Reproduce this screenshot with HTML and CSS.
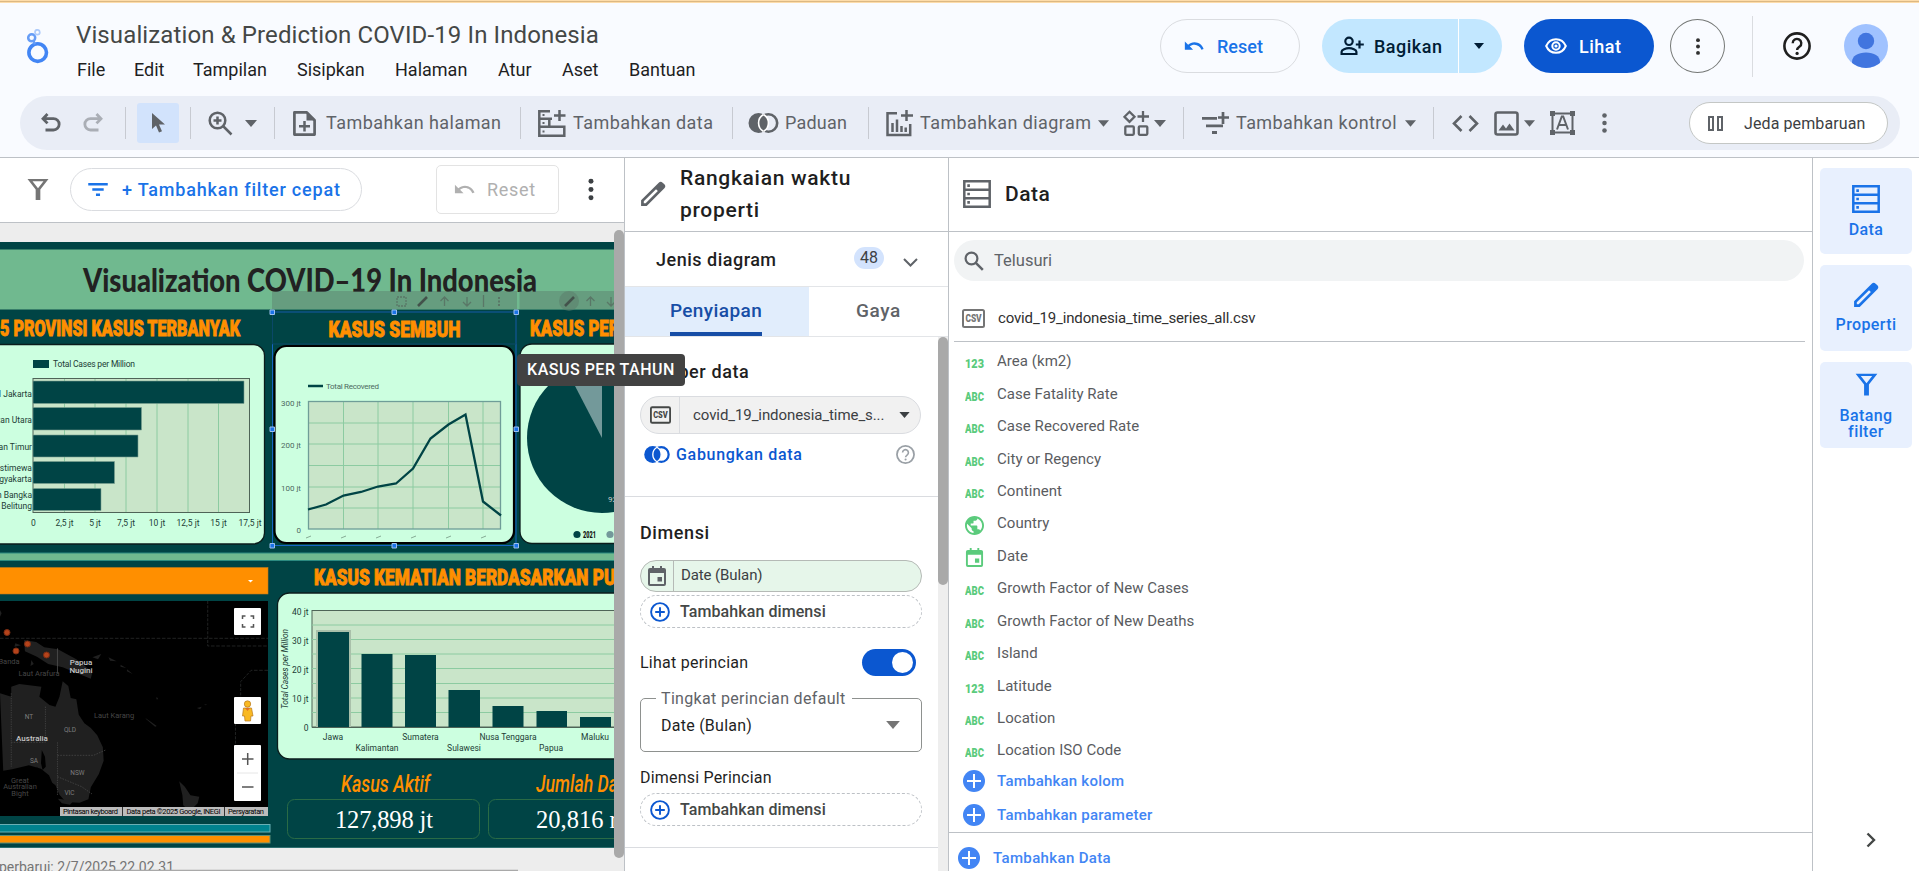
FILE: index.html
```html
<!DOCTYPE html>
<html lang="id">
<head>
<meta charset="utf-8">
<title>Visualization &amp; Prediction COVID-19 In Indonesia</title>
<link rel="stylesheet" href="styles.css">
</head>
<body>
<svg class="defs" aria-hidden="true">
  <symbol id="undo" viewBox="0 0 24 24"><path d="M8.500 3 4 7.700 8.500 12.400M4 7.700h10.500a5.600 5.600 0 0 1 0 11.300H6.500" fill="none" stroke="currentColor" stroke-width="2.800"/></symbol>
  <symbol id="revert" viewBox="0 0 24 24"><path d="M12.500 8c-2.650 0-5.050 1-6.900 2.600L2 7v9h9l-3.620-3.620C8.770 11.220 10.540 10.500 12.500 10.500c3.540 0 6.550 2.310 7.600 5.500l2.370-.780C21.080 11.030 17.150 8 12.500 8z" fill="currentColor"/></symbol>
  <symbol id="caret" viewBox="0 0 12 7"><path d="M0 0h12L6 7z" fill="currentColor"/></symbol>
  <symbol id="dots" viewBox="0 0 8 24"><g fill="currentColor"><circle cx="4" cy="3.500" r="2.600"/><circle cx="4" cy="12" r="2.600"/><circle cx="4" cy="20.500" r="2.600"/></g></symbol>
  <symbol id="funnel" viewBox="0 0 24 24"><path d="M3 3h18l-7 9v9h-4v-9zM7.300 5l4.700 6 4.700-6z" fill="currentColor" fill-rule="evenodd"/></symbol>
  <symbol id="lines" viewBox="0 0 24 16"><path d="M0 0h24v3H0zM5 6.500h14v3H5zM9.500 13h5v3h-5z" fill="currentColor"/></symbol>
  <symbol id="pencil" viewBox="0 0 24 24"><path d="M1 23v-5.200L17.300 1.500a2.600 2.600 0 0 1 3.600 0l1.600 1.600a2.600 2.600 0 0 1 0 3.600L6.200 23zM3.500 20.500h1.700L16.500 9.200l-1.700-1.700L3.500 18.800z" fill="currentColor" fill-rule="evenodd"/></symbol>
  <symbol id="table" viewBox="0 0 28 28"><path d="M1.300 1.300h25.400v25.400H1.300zM1 9.800h26M1 18.200h26" fill="none" stroke="currentColor" stroke-width="2.500"/><path d="M4.300 4.300h2.600v2.600H4.300zM4.300 12.700h2.600v2.600H4.300zM4.300 21.100h2.600v2.600H4.300z" fill="currentColor"/></symbol>
  <symbol id="blend" viewBox="0 0 30 20"><circle cx="10" cy="10" r="10" fill="currentColor"/><circle cx="20" cy="10" r="8.700" fill="none" stroke="currentColor" stroke-width="2.600"/><path d="M15 1.500a9.800 9.800 0 0 0 0 17" fill="none" stroke="#fff" stroke-width="1.600"/><path d="M15 1.500a9.800 9.800 0 0 1 0 17" fill="none" stroke="#fff" stroke-width="1.600"/></symbol>
  <symbol id="plusring" viewBox="0 0 20 20"><circle cx="10" cy="10" r="8.900" fill="none" stroke="currentColor" stroke-width="1.900"/><path d="M10 5.200v9.600M5.200 10h9.600" stroke="currentColor" stroke-width="1.900"/></symbol>
  <symbol id="plusdisc" viewBox="0 0 22 22"><circle cx="11" cy="11" r="11" fill="#4285f4"/><path d="M11 4v14M4 11h14" stroke="#fff" stroke-width="2"/></symbol>
  <symbol id="calendar" viewBox="0 0 18 20"><path d="M4 0h2v2h6V0h2v2h2a2 2 0 0 1 2 2v14a2 2 0 0 1-2 2H2a2 2 0 0 1-2-2V4a2 2 0 0 1 2-2h2zM2 7v11h14V7zM9.500 11h4.500v4.500H9.500z" fill="currentColor" fill-rule="evenodd"/></symbol>
  <symbol id="globe" viewBox="2 2 20 20"><path d="M12 2C6.480 2 2 6.480 2 12s4.480 10 10 10 10-4.480 10-10S17.520 2 12 2zm-1 17.930c-3.950-.490-7-3.850-7-7.930 0-.620.080-1.210.210-1.790L9 15v1c0 1.100.9 2 2 2v1.930zm6.900-2.540c-.260-.810-1-1.390-1.900-1.390h-1v-3c0-.550-.450-1-1-1H8v-2h2c.550 0 1-.450 1-1V7h2c1.100 0 2-.9 2-2v-.410c2.930 1.190 5 4.060 5 7.410 0 2.080-.8 3.970-2.100 5.390z" fill="currentColor"/></symbol>
  <symbol id="helpring" viewBox="0 0 28 28"><circle cx="14" cy="14" r="12.600" fill="none" stroke="currentColor" stroke-width="2.600"/><path d="M9.700 11.200a4.300 4.300 0 1 1 6.900 3.400c-1.500 1.100-2.500 1.700-2.500 3.500" fill="none" stroke="currentColor" stroke-width="2.400"/><circle cx="14.100" cy="21.400" r="1.600" fill="currentColor"/></symbol>
</svg>

<header class="top">
  <svg class="logo" viewBox="0 0 22 35"><circle cx="10.700" cy="23.600" r="8.800" fill="none" stroke="#4285f4" stroke-width="3.600"/><circle cx="4.700" cy="8.800" r="3.500" fill="none" stroke="#669df6" stroke-width="2.500"/><circle cx="10.400" cy="3.200" r="2.400" fill="none" stroke="#aecbfa" stroke-width="1.700"/><path d="m6.500 11.500 1.300 3.800" stroke="#669df6" stroke-width="2.300"/></svg>
  <div class="brand">
    <div class="title">Visualization &amp; Prediction COVID-19 In Indonesia</div>
    <nav class="menu"><span style="width:29px">File</span><span style="width:31px">Edit</span><span style="width:76px">Tampilan</span><span style="width:70px">Sisipkan</span><span style="width:75px">Halaman</span><span style="width:36px">Atur</span><span style="width:39px">Aset</span><span style="width:71px">Bantuan</span></nav>
  </div>
  <div class="actions">
    <div class="btn reset"><svg width="22" height="22"><use href="#revert"/></svg><span>Reset</span></div>
    <div class="share">
      <div class="share-main"><svg width="24" height="20" viewBox="0 0 24 20"><g fill="none" stroke="currentColor" stroke-width="2.200"><circle cx="9" cy="5.300" r="3.700"/><path d="M1.600 18v-2.200c0-2 4.200-3.600 7.400-3.600s7.400 1.600 7.400 3.600V18zM19.500 4.500v8M15.800 8.500h8"/></g></svg><span>Bagikan</span></div>
      <div class="share-more"><svg width="10" height="6"><use href="#caret"/></svg></div>
    </div>
    <div class="btn view"><svg width="22" height="16" viewBox="0 0 22 16"><g fill="none" stroke="currentColor" stroke-width="2"><path d="M1.200 8C3 3.800 6.700 1.200 11 1.200S19 3.800 20.800 8C19 12.200 15.300 14.800 11 14.800S3 12.200 1.200 8z"/><circle cx="11" cy="8" r="3.700"/></g><circle cx="11" cy="8" r="1.600" fill="currentColor"/></svg><span>Lihat</span></div>
    <div class="more"><svg width="6" height="19"><use href="#dots"/></svg></div>
    <i class="vline"></i>
    <svg class="help" width="28" height="28"><use href="#helpring"/></svg>
    <svg class="avatar" viewBox="0 0 44 44"><defs><clipPath id="av"><circle cx="22" cy="22" r="22"/></clipPath></defs><g clip-path="url(#av)"><path d="M0 0h44v44H0z" fill="#a0c2ff"/><g fill="#4175df"><circle cx="22" cy="17" r="8.200"/><path d="M8 38c0-6 6-9.500 14-9.500S36 32 36 38v6H8z"/></g></g></svg>
  </div>
</header>

<div class="toolbar">
  <svg style="margin-left:19px" width="24" height="24"><use href="#undo"/></svg>
  <svg class="faint" style="margin-left:18px" width="24" height="24"><g transform="matrix(-1 0 0 1 24 0)"><use href="#undo" width="24" height="24"/></g></svg>
  <i style="margin-left:20px"></i>
  <div class="pick"><svg width="13" height="20" viewBox="0 0 13 20"><path d="M0 0v16l4-3.500 3 7 3-1.300-3-6.700H13z" fill="currentColor"/></svg></div>
  <i style="margin-left:11px"></i>
  <svg style="margin-left:17px" width="25" height="25" viewBox="0 0 25 25"><g fill="none" stroke="currentColor" stroke-width="2.500"><circle cx="9.500" cy="9.500" r="7.800"/><path d="m15 15 8.500 8.500M9.500 5.500v8M5.500 9.500h8"/></g></svg>
  <svg style="margin-left:12px" width="12" height="7"><use href="#caret"/></svg>
  <i style="margin-left:17px"></i>
  <svg style="margin-left:18px" width="23" height="27" viewBox="0 0 23 27"><path d="M1.400 2.400h12.400l7.800 7.800v14.400H1.400z" fill="none" stroke="currentColor" stroke-width="2.700" stroke-linejoin="round"/><path d="M13.500 1v9.500H22z" fill="currentColor"/><path d="M11.500 11v10.500M6 16.300h11" stroke="currentColor" stroke-width="2.500"/></svg>
  <span style="margin-left:10px;width:177px;letter-spacing:.450px">Tambahkan halaman</span>
  <i style="margin-left:17px"></i>
  <svg style="margin-left:17px" width="28" height="28" viewBox="0 0 28 28"><g fill="none" stroke="currentColor" stroke-width="2.500"><path d="M12 2.300H1.300v7.500H14M21.500 1v11M16 6.500h11.500M1.300 9.800h10v8h15v8.900H1.300zM1.300 17.800h11M1.300 26.700V9"/></g><path d="M4.500 5h2v2h-2zM4.500 13h2v2h-2zM4.500 21.500h2v2h-2z" fill="currentColor"/></svg>
  <span style="margin-left:7px;width:141px;letter-spacing:.450px">Tambahkan data</span>
  <i style="margin-left:18px"></i>
  <svg style="margin-left:15px" width="31" height="20"><use href="#blend"/></svg>
  <span style="margin-left:6px;width:64px;letter-spacing:.200px">Paduan</span>
  <i style="margin-left:19px"></i>
  <svg style="margin-left:17px" width="27" height="27" viewBox="0 0 27 27"><g fill="none" stroke="currentColor" stroke-width="2.500"><path d="M11 3.300H1.500V25h22.700V14M20.500 0v11M15 5.500h12"/><path d="M6.500 13v9M11 9.500V22M15.500 16v6M19.700 17.500V22"/></g></svg>
  <span style="margin-left:7px;width:173px;letter-spacing:.420px">Tambahkan diagram</span>
  <svg style="margin-left:5px" width="11" height="7"><use href="#caret"/></svg>
  <svg style="margin-left:14px" width="27" height="26" viewBox="0 0 27 26"><g fill="none" stroke="currentColor" stroke-width="2.300"><path d="m6.500 1.800 5 5-5 5-5-5zM20 1v11M14.500 6.500h11.500"/><rect x="2.300" y="16.300" width="8.500" height="8.500" rx="1"/><rect x="15.800" y="16.300" width="8.500" height="8.500" rx="1"/></g></svg>
  <svg style="margin-left:4px" width="12" height="7"><use href="#caret"/></svg>
  <i style="margin-left:17px"></i>
  <svg style="margin-left:18px" width="27" height="24" viewBox="0 0 27 24"><path d="M0 6h15v2.700H0zM4 13.500h17v2.700H4zM10 20h5v3h-5z" fill="currentColor"/><path d="M21 1v12M16 6.500h11" stroke="currentColor" stroke-width="2.700"/></svg>
  <span style="margin-left:7px;width:162px;letter-spacing:.400px">Tambahkan kontrol</span>
  <svg style="margin-left:7px" width="11" height="7"><use href="#caret"/></svg>
  <i style="margin-left:17px"></i>
  <svg style="margin-left:18px" width="27" height="17" viewBox="0 0 27 17"><path d="M9.500 1 2 8.500 9.500 16M17.500 1 25 8.500 17.500 16" fill="none" stroke="currentColor" stroke-width="2.600"/></svg>
  <svg style="margin-left:15px" width="25" height="25" viewBox="0 0 25 25"><rect x="1.500" y="1.500" width="22" height="22" rx="2" fill="none" stroke="currentColor" stroke-width="2.600"/><path d="m4.500 19.500 4.500-6 3 4 3.500-5 5 7z" fill="currentColor"/></svg>
  <svg style="margin-left:5px" width="11" height="7"><use href="#caret"/></svg>
  <svg style="margin-left:15px" width="25" height="24" viewBox="0 0 25 24"><rect x="2.500" y="2.500" width="20" height="19" fill="none" stroke="currentColor" stroke-width="2"/><path d="M0 0h5v5H0zM20 0h5v5h-5zM0 19h5v5H0zM20 19h5v5h-5z" fill="currentColor"/><path d="m7 18.500 4.800-13h1.400l4.800 13M8.800 14h7.400" fill="none" stroke="currentColor" stroke-width="2"/></svg>
  <svg style="margin-left:26px" width="7" height="22"><use href="#dots"/></svg>
  <div class="pause"><svg width="15" height="15" viewBox="0 0 15 15"><path d="M1 1h4v13H1zM10 1h4v13h-4z" fill="none" stroke="currentColor" stroke-width="2"/></svg><span>Jeda pembaruan</span></div>
</div>

<main>
  <section class="left">
    <div class="filters">
      <svg class="fn" width="28" height="29"><use href="#funnel"/></svg>
      <div class="chip"><svg width="20" height="13"><use href="#lines"/></svg><span>+ Tambahkan filter cepat</span></div>
      <div class="undo-box"><svg width="23" height="23"><use href="#revert"/></svg><span>Reset</span></div>
      <svg class="fd" width="8" height="23"><use href="#dots"/></svg>
    </div>
    <div class="canvas">
      <svg class="report" width="614" height="648" viewBox="0 223 614 648">
        <rect y="242" width="614" height="606" fill="#004445"/>
        <rect y="249.500" width="614" height="60" fill="#70b98f"/>
        <text class="hand" x="83" y="291.500" textLength="454" lengthAdjust="spacingAndGlyphs">Visualization COVID–19 In Indonesia</text>
        <path d="M272 291h245v18H272zM519.500 291H614v18h-94.500z" fill="#5b7d6c" opacity=".45"/>
        <g fill="none" stroke="#5a7767" stroke-width="1.300"><rect x="397" y="297" width="9" height="9" stroke-dasharray="2 1"/><path d="M444.500 306v-9m-4 4 4-4 4 4M467 297v9m-4-4 4 4 4-4M483.500 295v12M590.500 306v-9m-4 4 4-4 4 4M611 297v9m-4-4 4 4 4-4"/><path d="M499 297v9" stroke-width="2" stroke-dasharray="2 1.500"/></g>
        <circle cx="569" cy="301" r="10" fill="#5b7d6c" opacity=".55"/>
        <path d="m418 306 9-9M565 306l9-9" stroke="#43524b" stroke-width="2.600"/>
        <g class="anton"><text x="0" y="336" textLength="240" lengthAdjust="spacingAndGlyphs">5 PROVINSI KASUS TERBANYAK</text><text x="328.500" y="337" textLength="132" lengthAdjust="spacingAndGlyphs">KASUS SEMBUH</text><text x="530" y="335.500" textLength="149" lengthAdjust="spacingAndGlyphs">KASUS PER TAHUN</text></g>
        <g fill="#ccffe0" stroke="#0b1d1c" stroke-width="1.300"><rect x="-20" y="344.500" width="284.500" height="199.500" rx="11"/><rect x="274.500" y="346" width="239.500" height="197" rx="12" stroke-width="2.200" stroke="#000"/><rect x="520" y="344" width="200" height="199.500" rx="12"/></g>

        <g class="lab">
          <rect x="33" y="360" width="16" height="8" fill="#004445"/><text x="53" y="367" textLength="82">Total Cases per Million</text>
          <rect x="33" y="378.500" width="216.500" height="134" fill="#c9e5c9" stroke="#4e6457"/>
          <path d="M64.500 379v133M95 379v133M126 379v133M157 379v133M188 379v133M218.500 379v133" stroke="#8ccba1"/>
          <g fill="#004445" stroke="#7aa091" stroke-width=".6"><path d="M33 381h211v22.500H33zM33 407.500h108.500V430H33zM33 435h105v22H33zM33 461.500h81.500v22H33zM33 488.500h68v22H33z"/></g>
          <g text-anchor="end"><text x="32" y="396.500">DKI Jakarta</text><text x="32" y="422.500">Kalimantan Utara</text><text x="32" y="449.500">Kalimantan Timur</text><text x="32" y="470.500">Daerah Istimewa</text><text x="32" y="481.500">Yogyakarta</text><text x="32" y="497.500">Kepulauan Bangka</text><text x="32" y="508.500">Belitung</text></g>
          <g text-anchor="middle"><text x="33.500" y="525.500">0</text><text x="64.500" y="525.500">2,5 jt</text><text x="95" y="525.500">5 jt</text><text x="126" y="525.500">7,5 jt</text><text x="157" y="525.500">10 jt</text><text x="188" y="525.500">12,5 jt</text><text x="218.500" y="525.500">15 jt</text><text x="250" y="525.500">17,5 jt</text></g>
        </g>

        <g class="lab dim">
          <path d="M308 386h15" stroke="#004445" stroke-width="2.500"/><text x="326" y="389" textLength="53">Total Recovered</text>
          <rect x="308.500" y="401.500" width="192" height="127.500" fill="#c9e5c9"/>
          <path d="M343.500 402v127M378 402v127M413 402v127M448.500 402v127M483 402v127M309 423h192M309 444h192M309 465.500h192M309 487h192M309 508h192" stroke="#8ccba1"/>
          <rect x="308.500" y="401.500" width="192" height="127.500" fill="none" stroke="#6f9d98" stroke-width="1.300"/>
          <path d="m308 509.500 18-5 17.500-9 17.500-3.500 17-5.500 18-3 17-15 17.500-30 18-14 17-10 17.500 87 18 14" fill="none" stroke="#004445" stroke-width="2.300"/>
          <path d="m306 538 5-2m30 2 5-2m30 2 5-2m30 2 5-2m30 2 5-2m30 2 5-2" stroke="#86ab95"/>
          <g text-anchor="end"><text x="301" y="405.500">300 jt</text><text x="301" y="447.500">200 jt</text><text x="301" y="490.500">100 jt</text><text x="301" y="532.500">0</text></g>
        </g>

        <circle cx="602" cy="438" r="75" fill="#004445"/>
        <path d="M602 438V363a75 75 0 0 0-34.500 8.400z" fill="#73999a"/>
        <text x="608" y="502" font-family="Roboto" font-size="8" fill="#ccc">92</text>
        <circle cx="577" cy="534.500" r="3.600" fill="#004445"/><circle cx="610" cy="534.500" r="3.600" fill="#73999a"/>
        <text x="583" y="537.500" textLength="13" lengthAdjust="spacingAndGlyphs" font-family="Roboto" font-weight="900" font-size="8.500" fill="#111">2021</text>

        <path d="M272.500 312H516v233.500H272.500z" fill="none" stroke="#1665c4"/>
        <path d="M272.500 312H516v32H272.500z" fill="none" stroke="#0a4868"/>
        <g fill="#1a73e8" stroke="#9cc0ee"><path d="M270 310h4.500v4.500H270zM392 310h4.500v4.500H392zM514 310h4.500v4.500H514zM270 427h4.500v4.500H270zM514 427h4.500v4.500H514zM270 543.500h4.500v4.500H270zM392 543.500h4.500v4.500H392zM514 543.500h4.500v4.500H514z"/></g>

        <rect x="-3" y="553" width="620" height="7.500" fill="#70b98f" stroke="#2b8a80"/>
        <rect x="-3" y="567.500" width="271" height="26.500" fill="#ff8f00" stroke="#c2791a" stroke-width=".6"/><path d="M248 580h5l-2.500 2.500z" fill="#fff"/>

        <rect y="601" width="268" height="215" fill="#000"/>
        <g transform="translate(0 560) scale(.4018 .3333)">
          <path d="M0 400l28 10v-30l20-8 55 8-5 30 25 25 15 5 10-30 8-46 14 14 6 36 14 4 6 46 14 26 16 14 16 22 14 36 2 40-12 40-20 40-6 36-22 10-34-2-16-22-10-28-8-8-8-22-20-20-30-10-42 12-22 4z" fill="#202020"/>
          <path d="M144 716l24 4 22-6-16 20-20-4zM446 664l14 16 14 26 22 4-4 20-20 24-16-18-2-30zM60 240l30 6 20 16 34 6 46 30 40 38-4 20-34-16-36-18-36-10-28-22-30-16zM362 474l28 24-4 2-22-22zM230 292l22-10-8 16zM490 444l12-4-4 8zM508 434l8-2-5 4zM390 410l4 8h-5zM270 292l20 12-16-2zM300 314l14 10-14-4zM316 328l14 14-14-8zM0 150l4 10-4 10zM38 250l14 6-16 4zM78 300l6 12-8 6z" fill="#202020"/>
          <path d="M104 570l8 20 2 30-8 10-4-20zM92 620l4 12-6-4z" fill="#000"/>
          <g fill="none" stroke="#4a4a4a" stroke-width="2" stroke-dasharray="4 3"><path d="M28 400v220M113 440v107H28M143 547v160M143 586h90l30-16M143 650l40 20 20 10 26 22"/></g>
          <path d="M0 235h667M517 123v135h150M667 331h-42l-26 34v46M586 490v64" fill="none" stroke="#2c2f2f" stroke-width="2" stroke-dasharray="9 4"/><path d="M143 265v75" stroke="#555" stroke-width="2"/>
        </g>
        <g fill="#b5431b" stroke="#7b2c12"><circle cx="7" cy="632.500" r="3"/><circle cx="27.500" cy="644" r="3"/><circle cx="16" cy="651" r="3"/><circle cx="46.500" cy="655" r="3"/></g>
        <g class="sea" text-anchor="middle"><text x="9" y="663.500">Banda</text><text x="39" y="675.500">Laut Arafura</text><text x="114" y="718">Laut Karang</text><text x="20" y="782.500">Great</text><text x="20" y="789">Australian</text><text x="20" y="795.500">Bight</text></g>
        <g class="state" text-anchor="middle"><text x="29" y="718.500">NT</text><text x="70" y="732">QLD</text><text x="34" y="762.500">SA</text><text x="77.500" y="774.500">NSW</text><text x="69.500" y="795">VIC</text></g>
        <g class="nation" text-anchor="middle"><text x="81" y="665">Papua</text><text x="81" y="673">Nugini</text><text x="32" y="741">Australia</text></g>
        <g fill="#fff"><rect x="234" y="608" width="27" height="27" rx="1"/><rect x="234" y="697" width="27" height="27" rx="1"/><rect x="234" y="745" width="27" height="56" rx="1"/></g>
        <path d="M242.500 619v-3h3M250.500 616h3v3M253.500 624v3h-3M245.500 627h-3v-3M242 759h11.500M247.700 753v12M242 787h11.500" fill="none" stroke="#555" stroke-width="1.500"/><path d="M237 773h21" stroke="#e6e6e6"/>
        <g fill="#f9b923" stroke="#b8791f" stroke-width=".7"><circle cx="247.500" cy="704" r="3.200"/><path d="M243.500 708h8l1.500 8h-2l-.5 5h-5.500l-.5-5h-2z"/></g><path d="m245 708 2.500 3 2.500-3z" fill="#e0702a"/>
        <path d="M60 807h208v9H60z" fill="#bcbcbc"/><path d="M122.500 807v9M224.500 807v9" stroke="#333"/>
        <g font-family="Roboto" font-size="7.500" fill="#000"><text x="63" y="814" textLength="55">Pintasan keyboard</text><text x="126.500" y="814" textLength="94">Data peta ©2025 Google, INEGI</text><text x="228" y="814" textLength="36">Persyaratan</text></g>
        <rect x="-3" y="824.500" width="273" height="7.500" fill="#00838f" stroke="#69b0b5"/><rect x="-3" y="835.500" width="273" height="7.500" fill="#ff8f00" stroke="#5e8f78"/>

        <g class="anton"><text x="314" y="585" textLength="334" lengthAdjust="spacingAndGlyphs">KASUS KEMATIAN BERDASARKAN PULAU</text></g>
        <rect x="277.500" y="593" width="400" height="166" rx="12" fill="#ccffe0" stroke="#0b1d1c" stroke-width="1.300"/>
        <g class="lab">
          <rect x="312" y="610.500" width="330" height="116.500" fill="#c9e5c9" stroke="#4e6457"/>
          <path d="M312 625h302M312 639.500h302M312 654h302M312 668.500h302M312 683.500h302M312 698h302M312 712.500h302" stroke="#8ccba1"/>
          <path d="M316 630h35v97h-35z" fill="#a9c0aa"/>
          <path d="M318 632h31v95h-31zM361.500 654h31v73h-31zM405 655h31v72h-31zM448.500 690H480v37h-31.500zM492.500 706h31v21h-31zM536.500 711H567v16h-30.500zM580 717h31v10h-31z" fill="#004445"/>
          <path d="M312 727.500h302" stroke="#4e6457"/>
          <g text-anchor="end"><text x="308.500" y="614.500">40 jt</text><text x="308.500" y="643.500">30 jt</text><text x="308.500" y="672.500">20 jt</text><text x="308.500" y="701.500">10 jt</text><text x="308.500" y="730.500">0</text></g>
          <g text-anchor="middle"><text x="333" y="740">Jawa</text><text x="377" y="751">Kalimantan</text><text x="420.500" y="740">Sumatera</text><text x="464" y="751">Sulawesi</text><text x="508" y="740">Nusa Tenggara</text><text x="551" y="751">Papua</text><text x="595" y="740">Maluku</text></g>
          <text transform="translate(288 709) rotate(-90)" textLength="80" font-style="italic">Total Cases per Million</text>
        </g>
        <g class="osw"><text x="341" y="792" textLength="89" lengthAdjust="spacingAndGlyphs">Kasus Aktif</text><text x="536" y="792" textLength="97" lengthAdjust="spacingAndGlyphs">Jumlah Data</text></g>
        <g fill="none" stroke="#2a6b45"><rect x="287.500" y="799.500" width="192" height="39" rx="7"/><rect x="488.500" y="799.500" width="192" height="39" rx="7"/></g>
        <g font-family="Liberation Serif, serif" font-size="24.500" fill="#fff"><text x="335" y="828" textLength="98">127,898 jt</text><text x="536" y="828">20,816 rb</text></g>
        <path d="M0 847.500h614" stroke="#2d6f70"/>
        <text x="174" y="872" text-anchor="end" font-family="Roboto" font-size="14" fill="#757575">Data Terakhir Diperbarui: 2/7/2025 22.02.31</text>
        <path d="M88 870.500h430" stroke="#a9a9a9" stroke-width="1.500"/>
      </svg>
      <div class="track"><div class="thumb"></div></div>
    </div>
  </section>

  <section class="props">
    <div class="ptitle"><svg width="26" height="26"><use href="#pencil"/></svg><span>Rangkaian waktu<br>properti</span></div>
    <div class="kind"><span class="k1">Jenis diagram</span><span class="badge">48</span><svg width="15" height="9" viewBox="0 0 15 9"><path d="m1 1 6.500 6.500L14 1" fill="none" stroke="#5f6368" stroke-width="2"/></svg></div>
    <div class="tabs"><div class="tab on"><span>Penyiapan</span></div><div class="tab">Gaya</div></div>
    <div class="pscroll">
      <div class="pbody">
        <div class="group first">
          <h3>Sumber data</h3>
          <div class="src"><div class="ic"><svg class="csv" width="21" height="18" viewBox="0 0 23 19"><rect x="1" y="1" width="21" height="17" rx="1.500"/><text x="3.500" y="13.200" textLength="16" lengthAdjust="spacingAndGlyphs">CSV</text></svg></div><span>covid_19_indonesia_time_s...</span><svg width="11" height="6"><use href="#caret"/></svg></div>
          <div class="mix"><svg width="26" height="17"><use href="#blend"/></svg><span>Gabungkan data</span><svg class="q" width="19" height="19" viewBox="0 0 28 28"><use href="#helpring"/></svg></div>
        </div>
        <div class="group second">
          <h3>Dimensi</h3>
          <div class="dim-pill"><div class="ic"><svg width="18" height="20"><use href="#calendar"/></svg></div><span>Date (Bulan)</span></div>
          <div class="add"><svg width="20" height="20"><use href="#plusring"/></svg><span>Tambahkan dimensi</span></div>
          <div class="switch-row"><span>Lihat perincian</span><div class="switch"></div></div>
          <div class="select"><label>Tingkat perincian default</label><span>Date (Bulan)</span><svg width="14" height="8"><use href="#caret"/></svg></div>
          <div class="sub">Dimensi Perincian</div>
          <div class="add low"><svg width="20" height="20"><use href="#plusring"/></svg><span>Tambahkan dimensi</span></div>
        </div>
      </div>
      <div class="ptrack"><div class="pthumb"></div></div>
    </div>
  </section>

  <section class="data">
    <div class="dtitle"><svg width="28" height="28"><use href="#table"/></svg><span>Data</span></div>
    <div class="search"><svg width="20" height="20" viewBox="0 0 20 20"><circle cx="7.500" cy="7.500" r="5.900" fill="none" stroke="#5f6368" stroke-width="2.200"/><path d="m11.800 11.800 7 7" stroke="#5f6368" stroke-width="2.500"/></svg><span>Telusuri</span></div>
    <div class="file"><svg class="csv" width="23" height="19" viewBox="0 0 23 19"><rect x="1" y="1" width="21" height="17" rx="1.500"/><text x="3.500" y="13.200" textLength="16" lengthAdjust="spacingAndGlyphs">CSV</text></svg><span>covid_19_indonesia_time_series_all.csv</span></div>
    <ul class="fields">
      <li><svg class="ty" width="20" height="12"><text y="11" textLength="19" lengthAdjust="spacingAndGlyphs">123</text></svg>Area (km2)</li>
      <li><svg class="ty" width="20" height="12"><text y="11" textLength="19" lengthAdjust="spacingAndGlyphs">ABC</text></svg>Case Fatality Rate</li>
      <li><svg class="ty" width="20" height="12"><text y="11" textLength="19" lengthAdjust="spacingAndGlyphs">ABC</text></svg>Case Recovered Rate</li>
      <li><svg class="ty" width="20" height="12"><text y="11" textLength="19" lengthAdjust="spacingAndGlyphs">ABC</text></svg>City or Regency</li>
      <li><svg class="ty" width="20" height="12"><text y="11" textLength="19" lengthAdjust="spacingAndGlyphs">ABC</text></svg>Continent</li>
      <li><svg class="pic" width="19" height="19"><use href="#globe"/></svg>Country</li>
      <li><svg class="pic" width="19" height="19"><use href="#calendar"/></svg>Date</li>
      <li><svg class="ty" width="20" height="12"><text y="11" textLength="19" lengthAdjust="spacingAndGlyphs">ABC</text></svg>Growth Factor of New Cases</li>
      <li><svg class="ty" width="20" height="12"><text y="11" textLength="19" lengthAdjust="spacingAndGlyphs">ABC</text></svg>Growth Factor of New Deaths</li>
      <li><svg class="ty" width="20" height="12"><text y="11" textLength="19" lengthAdjust="spacingAndGlyphs">ABC</text></svg>Island</li>
      <li><svg class="ty" width="20" height="12"><text y="11" textLength="19" lengthAdjust="spacingAndGlyphs">123</text></svg>Latitude</li>
      <li><svg class="ty" width="20" height="12"><text y="11" textLength="19" lengthAdjust="spacingAndGlyphs">ABC</text></svg>Location</li>
      <li><svg class="ty" width="20" height="12"><text y="11" textLength="19" lengthAdjust="spacingAndGlyphs">ABC</text></svg>Location ISO Code</li>
    </ul>
    <div class="adds"><div><svg width="22" height="22"><use href="#plusdisc"/></svg>Tambahkan kolom</div><div><svg width="22" height="22"><use href="#plusdisc"/></svg>Tambahkan parameter</div></div>
    <div class="foot"><svg width="22" height="22"><use href="#plusdisc"/></svg>Tambahkan Data</div>
  </section>

  <aside class="rail">
    <div class="rcard"><svg width="28" height="28"><use href="#table"/></svg><span>Data</span></div>
    <div class="rcard"><svg width="26" height="26"><use href="#pencil"/></svg><span>Properti</span></div>
    <div class="rcard two"><svg width="29" height="29"><use href="#funnel"/></svg><span>Batang<br>filter</span></div>
    <svg class="go" width="10" height="16" viewBox="0 0 10 16"><path d="m1.500 1.500 6.500 6.500-6.500 6.500" fill="none" stroke="#444746" stroke-width="2.400"/></svg>
  </aside>
  <div class="tip">KASUS PER TAHUN</div>
</main>
</body>
</html>
```
FILE: styles.css
```css
* { box-sizing: border-box; }
body { margin: 0; width: 1919px; height: 871px; overflow: hidden; background: #f9fbff; font-family: Roboto, "Open Sans", sans-serif; color: #1f1f1f; display: flex; flex-direction: column; }
.defs { position: absolute; width: 0; height: 0; }
svg { display: block; flex: none; }
span { white-space: nowrap; }

.top { height: 96px; flex: none; border-top: 3px solid #fddcaa; display: flex; background: #f9fbff; position: relative; }
.top::before { content: ""; position: absolute; top: -2px; left: 0; right: 0; height: 1px; background: #dcb883; }
.logo { width: 22px; height: 35px; margin: 26px 0 0 27px; }
.brand { margin-left: 27px; width: 640px; padding-top: 16px; }
.title { font-size: 24px; line-height: 32px; letter-spacing: .120px; color: #444746; white-space: nowrap; }
.menu { display: flex; gap: 28px; margin: 7px 0 0 1px; font-size: 18px; line-height: 24px; }
.actions { margin-left: auto; width: 759px; display: flex; padding-top: 16px; font-size: 18px; font-weight: 500; }
.btn, .share { height: 54px; border-radius: 27px; display: flex; align-items: center; }
.reset { width: 140px; border: 1px solid #dadce0; color: #1a73e8; padding-left: 22px; gap: 12px; }
.share { margin-left: 22px; width: 180px; background: #c2e7ff; color: #001d35; }
.share-main { width: 137px; height: 54px; border-right: 1px solid #fff; display: flex; align-items: center; padding-left: 18px; gap: 10px; letter-spacing: .5px; }
.share-more { flex: 1; display: flex; justify-content: center; padding-right: 3px; }
.view { margin-left: 22px; width: 130px; background: #0b57d0; color: #fff; padding-left: 21px; gap: 12px; letter-spacing: .5px; }
.more { margin-left: 16px; width: 55px; height: 54px; border: 1px solid #747775; border-radius: 50%; display: flex; align-items: center; justify-content: center; color: #303030; }
.vline { margin: -3px 0 0 27px; width: 1px; height: 61px; background: #dadce0; }
.help { margin: 13px 0 0 30px; }
.avatar { width: 44px; height: 44px; margin: 5px 0 0 33px; }

.toolbar { height: 54px; flex: none; margin: 0 19px 7px 20px; background: #e9edf6; border-radius: 27px; display: flex; align-items: center; color: #5f6368; font-size: 18px; }
.toolbar > i { width: 1px; height: 32px; background: #c7cad1; flex: none; }
.toolbar > span { line-height: 24px; flex: none; }
.toolbar .faint { opacity: .45; }
.pick { margin-left: 11px; width: 42px; height: 40px; border-radius: 3px; background: #d2e3fc; display: flex; align-items: center; justify-content: center; }
.pause { margin-left: auto; margin-right: 12px; width: 199px; height: 42px; border: 1px solid #c4c7c5; border-radius: 21px; background: #fff; display: flex; align-items: center; padding-left: 18px; gap: 21px; font-size: 16px; letter-spacing: .1px; color: #3c4043; }
.pause svg { color: #5f6368; }

main { flex: 1; min-height: 0; border-top: 1px solid #bdc1c6; background: #fff; display: flex; position: relative; }
.left { width: 624px; flex: none; display: flex; flex-direction: column; }
.filters { height: 65px; flex: none; border-bottom: 1px solid #bdc1c6; display: flex; padding-top: 7px; font-size: 18px; }
.fn { margin: 10px 0 0 24px; color: #757575; }
.chip { margin: 3px 0 0 18px; width: 292px; height: 43px; border: 1px solid #dadce0; border-radius: 22px; display: flex; align-items: center; padding-left: 17px; gap: 14px; color: #1a73e8; font-weight: 500; letter-spacing: .8px; }
.undo-box { margin-left: 74px; width: 123px; height: 49px; border: 1px solid #e3e3e3; border-radius: 5px; display: flex; align-items: center; padding-left: 16px; gap: 11px; color: #b0b0b0; letter-spacing: .7px; }
.fd { margin: 13px 0 0 28px; color: #3c4043; }
.canvas { flex: 1; min-height: 0; background: #ededed; display: flex; }
.track { width: 10px; padding-top: 7px; }
.thumb { height: 628px; border-radius: 5px; background: #a9a9a9; }
.hand { font-family: "Lato", sans-serif; font-weight: 900; font-size: 32px; fill: #222; }
.anton { font-family: Roboto, sans-serif; font-weight: 900; font-size: 22.500px; fill: #ff8f00; stroke: #ff8f00; stroke-width: .9px; }
.osw { font-family: Roboto, sans-serif; font-style: italic; font-weight: 500; font-size: 23px; fill: #ff8f00; }
.lab text { font-family: Roboto, sans-serif; font-size: 8.500px; fill: #223d36; }
.lab.dim text { fill: #4d6a60; font-size: 8px; }
.sea { font-family: Roboto, sans-serif; font-size: 7.500px; fill: #464646; }
.state { font-family: Roboto, sans-serif; font-size: 6.500px; fill: #7d7d7d; }
.nation { font-family: Roboto, sans-serif; font-size: 8px; font-weight: 500; fill: #c5c5c5; }
.csv rect { fill: none; stroke: currentColor; stroke-width: 2; }
.csv text { font-size: 10.500px; font-weight: 900; fill: currentColor; }
.ty text { font-size: 13.500px; font-weight: 900; fill: currentColor; }

.props { width: 324px; flex: none; border-left: 1px solid #bdc1c6; display: flex; flex-direction: column; }
.ptitle { height: 74px; flex: none; border-bottom: 1px solid #bdc1c6; display: flex; align-items: center; padding: 0 0 1px 15px; gap: 14px; font-size: 21px; line-height: 32px; font-weight: 500; letter-spacing: .7px; }
.ptitle svg { color: #5f6368; }
.kind { height: 55px; flex: none; border-bottom: 1px solid #e3e5e8; display: flex; align-items: center; padding-left: 31px; font-size: 18px; font-weight: 500; }
.k1 { width: 198px; letter-spacing: .5px; }
.badge { width: 30px; height: 22px; margin-top: -2px; border-radius: 11px; background: #d3e3fd; font-size: 16px; line-height: 22px; font-weight: 400; text-align: center; color: #3c4043; }
.kind svg { margin: 7px 0 0 19px; }
.tabs { height: 50px; flex: none; display: flex; border-bottom: 1px solid #e3e5e8; font-size: 19px; letter-spacing: .6px; font-weight: 500; color: #5f6368; line-height: 48px; text-align: center; }
.tab { flex: 1; }
.tab.on { flex: none; width: 184px; padding-right: 2px; background: #e1edfc; color: #174ea6; }
.tab.on span { display: inline-block; height: 49px; border-bottom: 4px solid #174ea6; letter-spacing: .4px; }
.pscroll { flex: 1; min-height: 0; display: flex; }
.pbody { width: 313px; overflow: hidden; }
.ptrack { width: 10px; background: #eee; }
.pthumb { height: 248px; border-radius: 5px; background: #a9a9a9; }
.group { border-bottom: 1px solid #dadce0; padding-left: 15px; }
.first { height: 160px; padding-top: 23px; }
.second { height: 351px; padding-top: 24px; }
h3 { margin: 0; font-size: 18px; font-weight: 500; line-height: 24px; letter-spacing: .6px; }
.src { margin-top: 12px; width: 281px; height: 38px; border: 1px solid #dadce0; border-radius: 19px; background: #f1f1f1; display: flex; align-items: center; color: #3c4043; font-size: 15px; }
.ic { height: 100%; display: flex; align-items: center; justify-content: center; }
.src .ic { width: 39px; border-right: 1px solid #dadce0; color: #444746; }
.src > span { margin-left: 13px; width: 206px; letter-spacing: -.080px; }
.mix { margin-top: 8px; height: 24px; padding-left: 4px; display: flex; align-items: center; color: #0b57d0; font-weight: 500; font-size: 16px; }
.mix span { margin-left: 6px; width: 220px; letter-spacing: .7px; }
.q { color: #9aa0a6; }
.dim-pill { margin-top: 15px; width: 282px; height: 32px; border: 1px solid #b5bab6; border-radius: 16px; background: #e6f6ea; display: flex; align-items: center; font-size: 15px; color: #3c4043; }
.dim-pill .ic { width: 33px; border-right: 1px solid #b5bab6; color: #5f6368; }
.dim-pill span { margin: -3px 0 0 7px; letter-spacing: -.1px; }
.add { margin-top: 3px; width: 282px; height: 33px; border: 1px dashed #bdc1c6; border-radius: 17px; display: flex; align-items: center; padding-left: 9px; gap: 10px; font-size: 16px; font-weight: 500; color: #444746; letter-spacing: .080px; }
.add svg { color: #0b57d0; }
.switch-row { margin-top: 21px; height: 27px; display: flex; align-items: center; font-size: 16px; letter-spacing: .25px; }
.switch-row span { width: 222px; }
.switch { width: 54px; height: 27px; border-radius: 14px; background: #0b57d0; padding: 3px; display: flex; justify-content: flex-end; }
.switch::after { content: ""; width: 21px; height: 21px; border-radius: 50%; background: #fff; }
.select { margin-top: 22px; width: 282px; height: 54px; border: 1px solid #8e918f; border-radius: 5px; position: relative; display: flex; align-items: center; padding-left: 20px; font-size: 16px; letter-spacing: .25px; }
.select label { position: absolute; left: 15px; top: -11px; padding: 0 6px 0 5px; background: #fff; color: #5f6368; line-height: 22px; letter-spacing: .330px; white-space: nowrap; }
.select span { width: 225px; }
.select svg { color: #757575; }
.sub { margin-top: 15px; line-height: 22px; font-size: 16px; letter-spacing: .2px; }
.add.low { margin-top: 4px; }

.data { width: 864px; flex: none; border-left: 1px solid #bdc1c6; display: flex; flex-direction: column; }
.dtitle { height: 74px; flex: none; border-bottom: 1px solid #bdc1c6; display: flex; align-items: center; padding: 0 0 1px 14px; gap: 14px; font-size: 21px; font-weight: 500; letter-spacing: .5px; }
.dtitle svg { color: #5f6368; }
.search { margin: 8px 0 0 5px; width: 850px; height: 41px; border-radius: 21px; background: #f1f3f4; display: flex; align-items: center; padding-left: 10px; gap: 10px; font-size: 16.500px; color: #5f6368; }
.file { margin: 0 0 0 5px; width: 851px; height: 61px; border-bottom: 1px solid #bdc1c6; display: flex; align-items: center; padding: 14px 0 0 8px; gap: 13px; font-size: 15px; color: #303030; letter-spacing: -.150px; }
.file svg { color: #757575; }
.fields { list-style: none; margin: 3px 0 0; padding: 0 0 0 16px; height: 419px; font-size: 15px; color: #5a5c5f; }
.fields li { height: 32.450px; display: flex; align-items: center; gap: 12px; letter-spacing: .050px; }
.fields li svg { color: #5bcb7c; margin-top: 4px; }
.fields .pic { margin-right: 1px; }
.adds { font-size: 15px; font-weight: 500; color: #4285f4; letter-spacing: .220px; padding-left: 14px; }
.adds div { height: 34px; display: flex; align-items: center; gap: 12px; }
.foot { margin-top: auto; height: 39px; border-top: 1px solid #bdc1c6; display: flex; align-items: center; gap: 13px; padding: 11px 0 0 9px; font-size: 15px; font-weight: 500; color: #4285f4; letter-spacing: .350px; }

.rail { flex: 1; border-left: 1px solid #bdc1c6; padding: 10px 0 0 7px; display: flex; flex-direction: column; gap: 11px; }
.rcard { width: 92px; height: 86px; border-radius: 5px; background: #e8f0fe; color: #1a73e8; display: flex; flex-direction: column; align-items: center; padding-top: 17px; font-size: 16px; font-weight: 500; line-height: 16px; text-align: center; letter-spacing: .4px; }
.rcard span { margin-top: 9px; }
.rcard.two { padding-top: 8px; }
.go { margin: auto 0 23px 46px; }
.tip { position: absolute; left: 517px; top: 196px; width: 168px; height: 32px; border-radius: 4px; background: #424242; color: #fff; font-size: 16px; font-weight: 500; line-height: 31px; text-align: center; letter-spacing: .5px; }
```
